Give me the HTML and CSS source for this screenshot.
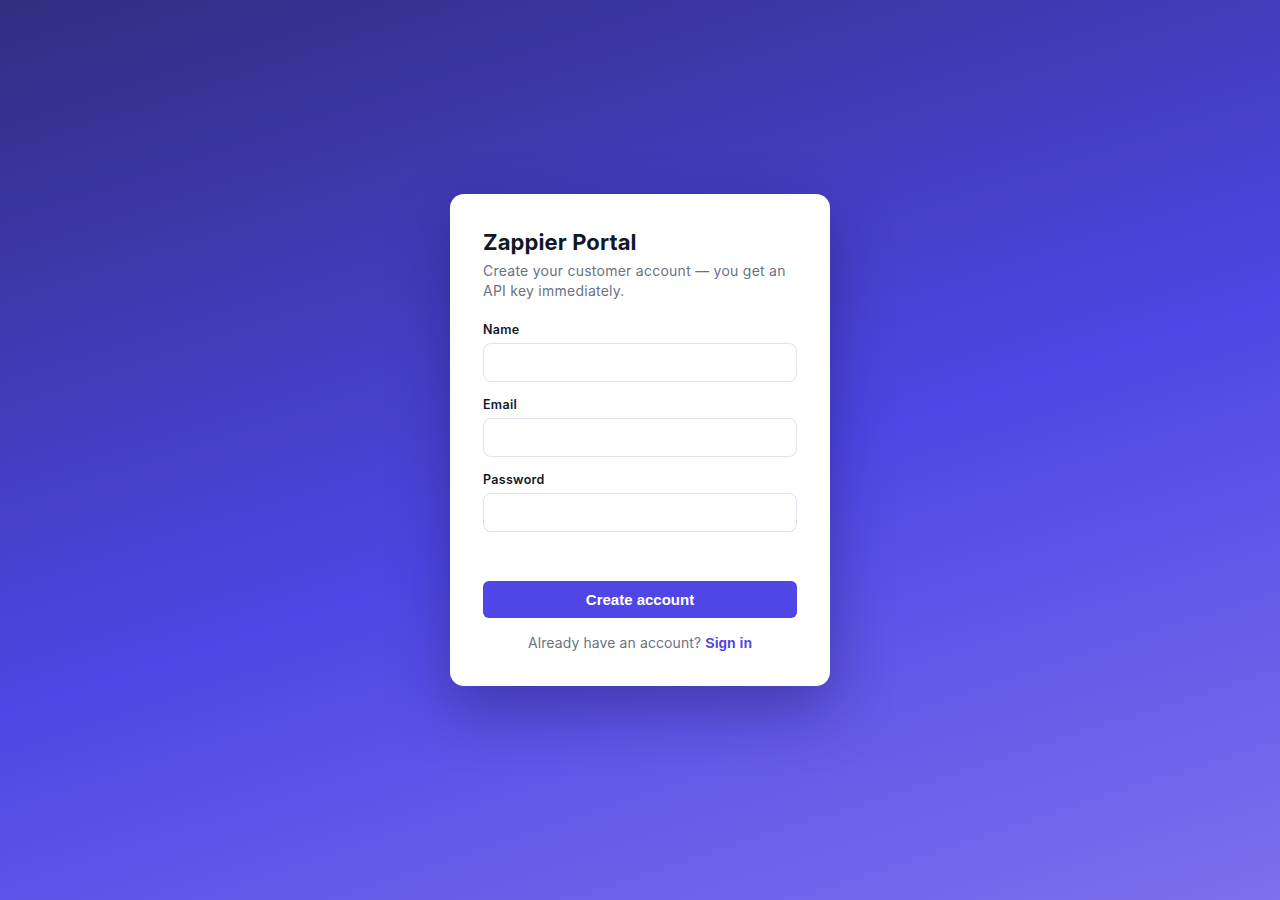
FILE: index.html
```html
<!DOCTYPE html>
<html lang="en">
<head>
<meta charset="utf-8">
<title>Zappier Portal</title>
<link rel="stylesheet" href="styles.css">
</head>
<body>
<main class="page">
  <form class="card">
    <h1 class="title">Zappier Portal</h1>
    <p class="subtitle">Create your customer account — you get an API key immediately.</p>
    <div class="field">
      <label class="label">Name</label>
      <input class="input" type="text">
    </div>
    <div class="field">
      <label class="label">Email</label>
      <input class="input" type="email">
    </div>
    <div class="field">
      <label class="label">Password</label>
      <input class="input" type="password">
    </div>
    <button class="submit" type="button">Create account</button>
    <p class="switch">Already have an account? <button class="link" type="button">Sign in</button></p>
  </form>
</main>
</body>
</html>
```
FILE: styles.css
```css
* { box-sizing: border-box; }
html, body { margin: 0; height: 100%; }
body {
  font-family: Inter, "Noto Sans", sans-serif;
  background: linear-gradient(162deg, #312e81 0%, #4f46e5 54%, #7c70ee 100%);
  min-height: 900px;
}
.page {
  min-height: 900px;
  padding-bottom: 20px;
  display: flex;
  align-items: center;
  justify-content: center;
}
.card {
  width: 380px;
  background: #fff;
  border-radius: 14px;
  padding: 33px 33px 34px;
  box-shadow: 0 24px 60px rgba(20, 15, 80, 0.38);
  display: flex;
  flex-direction: column;
}
.title {
  margin: 0;
  font-size: 22px;
  line-height: 30px;
  font-weight: 700;
  letter-spacing: 0.1px;
  color: #111827;
}
.subtitle {
  margin: 4px 0 21px;
  font-size: 14px;
  line-height: 20px;
  letter-spacing: 0.25px;
  color: #6b7280;
}
.field {
  display: flex;
  flex-direction: column;
  margin-bottom: 15px;
}
.label {
  font-size: 12.5px;
  line-height: 16px;
  font-weight: 600;
  letter-spacing: 0.3px;
  color: #111827;
  margin-bottom: 5px;
}
.input {
  height: 39px;
  border: 1px solid #e2e2ef;
  border-radius: 8px;
  background: #fff;
  padding: 0 12px;
  font: inherit;
  font-size: 14px;
}
.submit {
  margin-top: 34px;
  height: 37px;
  border: none;
  border-radius: 6px;
  background: #4f46e5;
  color: #fff;
  font-family: "Liberation Sans", Arial, sans-serif;
  font-size: 15px;
  font-weight: 700;
}
.switch {
  margin: 16px 0 0;
  text-align: center;
  font-size: 14px;
  line-height: 18px;
  letter-spacing: 0.1px;
  color: #6b7280;
}
.link {
  border: none;
  background: none;
  padding: 0;
  color: #4f46e5;
  font-family: "Liberation Sans", Arial, sans-serif;
  font-size: 14px;
  font-weight: 700;
}
```
